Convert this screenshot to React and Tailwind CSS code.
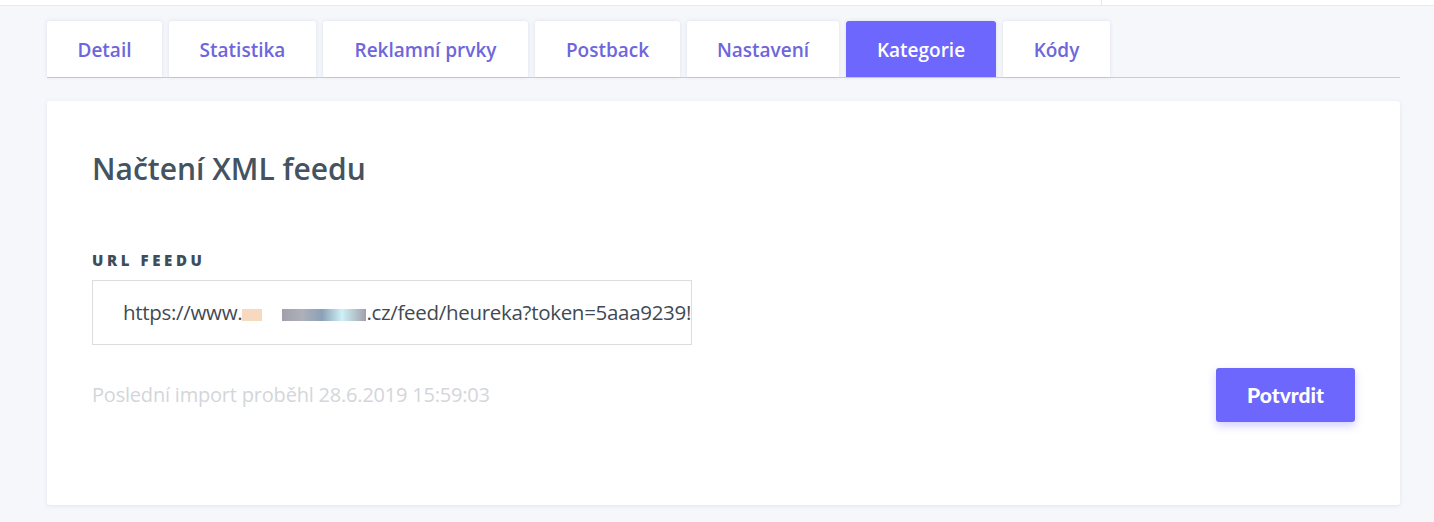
import React from "react";

const tabs = [
  { label: "Detail", w: "w-[115px]" },
  { label: "Statistika", w: "w-[147px]" },
  { label: "Reklamní prvky", w: "w-[205px]" },
  { label: "Postback", w: "w-[145px]" },
  { label: "Nastavení", w: "w-[152px]" },
  { label: "Kategorie", w: "w-[150px]", active: true },
  { label: "Kódy", w: "w-[107px]" },
];

function Tabs() {
  return (
    <div className="flex gap-[7px] border-b border-[#c9c8ea]">
      {tabs.map((t) => (
        <div
          key={t.label}
          className={
            "h-[56px] pt-[2px] flex items-center justify-center rounded-t-[3px] text-[19px] font-semibold shadow-[0_0_4px_rgba(120,130,170,0.18)] " +
            t.w +
            (t.active ? " bg-[#6d67fd] text-white" : " bg-white text-[#6d66dc]")
          }
        >
          {t.label}
        </div>
      ))}
    </div>
  );
}

export default function App() {
  return (
    <div
      className="min-h-[522px] bg-[#f5f7fb]"
      style={{ fontFamily: '"Open Sans", sans-serif' }}
    >
      <div className="h-[6px] bg-white border-b border-[#e6e9f0] flex">
        <div className="w-[1102px] border-r border-[#e6e9f0]"></div>
      </div>
      <div className="pl-[47px] pr-[34px] pt-[15px] pb-[17px]">
        <Tabs />
        <div className="mt-[23px] bg-white rounded-[3px] shadow-[0_1px_4px_rgba(120,130,170,0.15)] px-[45px] pt-[48px] pb-[82px] h-[404px]">
          <h1 className="text-[30px] font-semibold text-[#44535f] leading-[40px]">
            Načtení XML feedu
          </h1>
          <div className="mt-[61px] text-[15px] font-extrabold tracking-[3.6px] text-[#3e4d59] leading-[20px]">
            URL FEEDU
          </div>
          <div className="mt-[10px] w-[600px] h-[65px] border border-[#dcdcdc] flex items-center pl-[30px] overflow-hidden whitespace-nowrap">
            <span className="text-[20.5px] text-[#3f4a52] tracking-[-0.3px]">
              https://www.
              <span className="inline-block w-[124px] h-[12px] align-middle bg-[linear-gradient(90deg,#f3c9a4_0,#f3c9a4_20px,#fff_20px,#fff_40px,#778_40px,#8a8f9a_60px,#5a7899_80px,#b9eaf2_100px,#778_124px)] opacity-70"></span>
              .cz/feed/heureka?token=5aaa9239!
            </span>
          </div>
          <div className="mt-[23px] flex items-start justify-between">
            <div className="mt-[12px] text-[20px] text-[#d3d6da] tracking-[-0.2px]">
              Poslední import proběhl 28.6.2019 15:59:03
            </div>
            <button
              className="w-[139px] h-[54px] bg-[#6d67fd] rounded-[3px] text-white text-[21px] font-black shadow-[0_4px_8px_rgba(109,103,253,0.3)]"
              style={{ fontFamily: "Lato, sans-serif" }}
            >
              Potvrdit
            </button>
          </div>
        </div>
      </div>
    </div>
  );
}
